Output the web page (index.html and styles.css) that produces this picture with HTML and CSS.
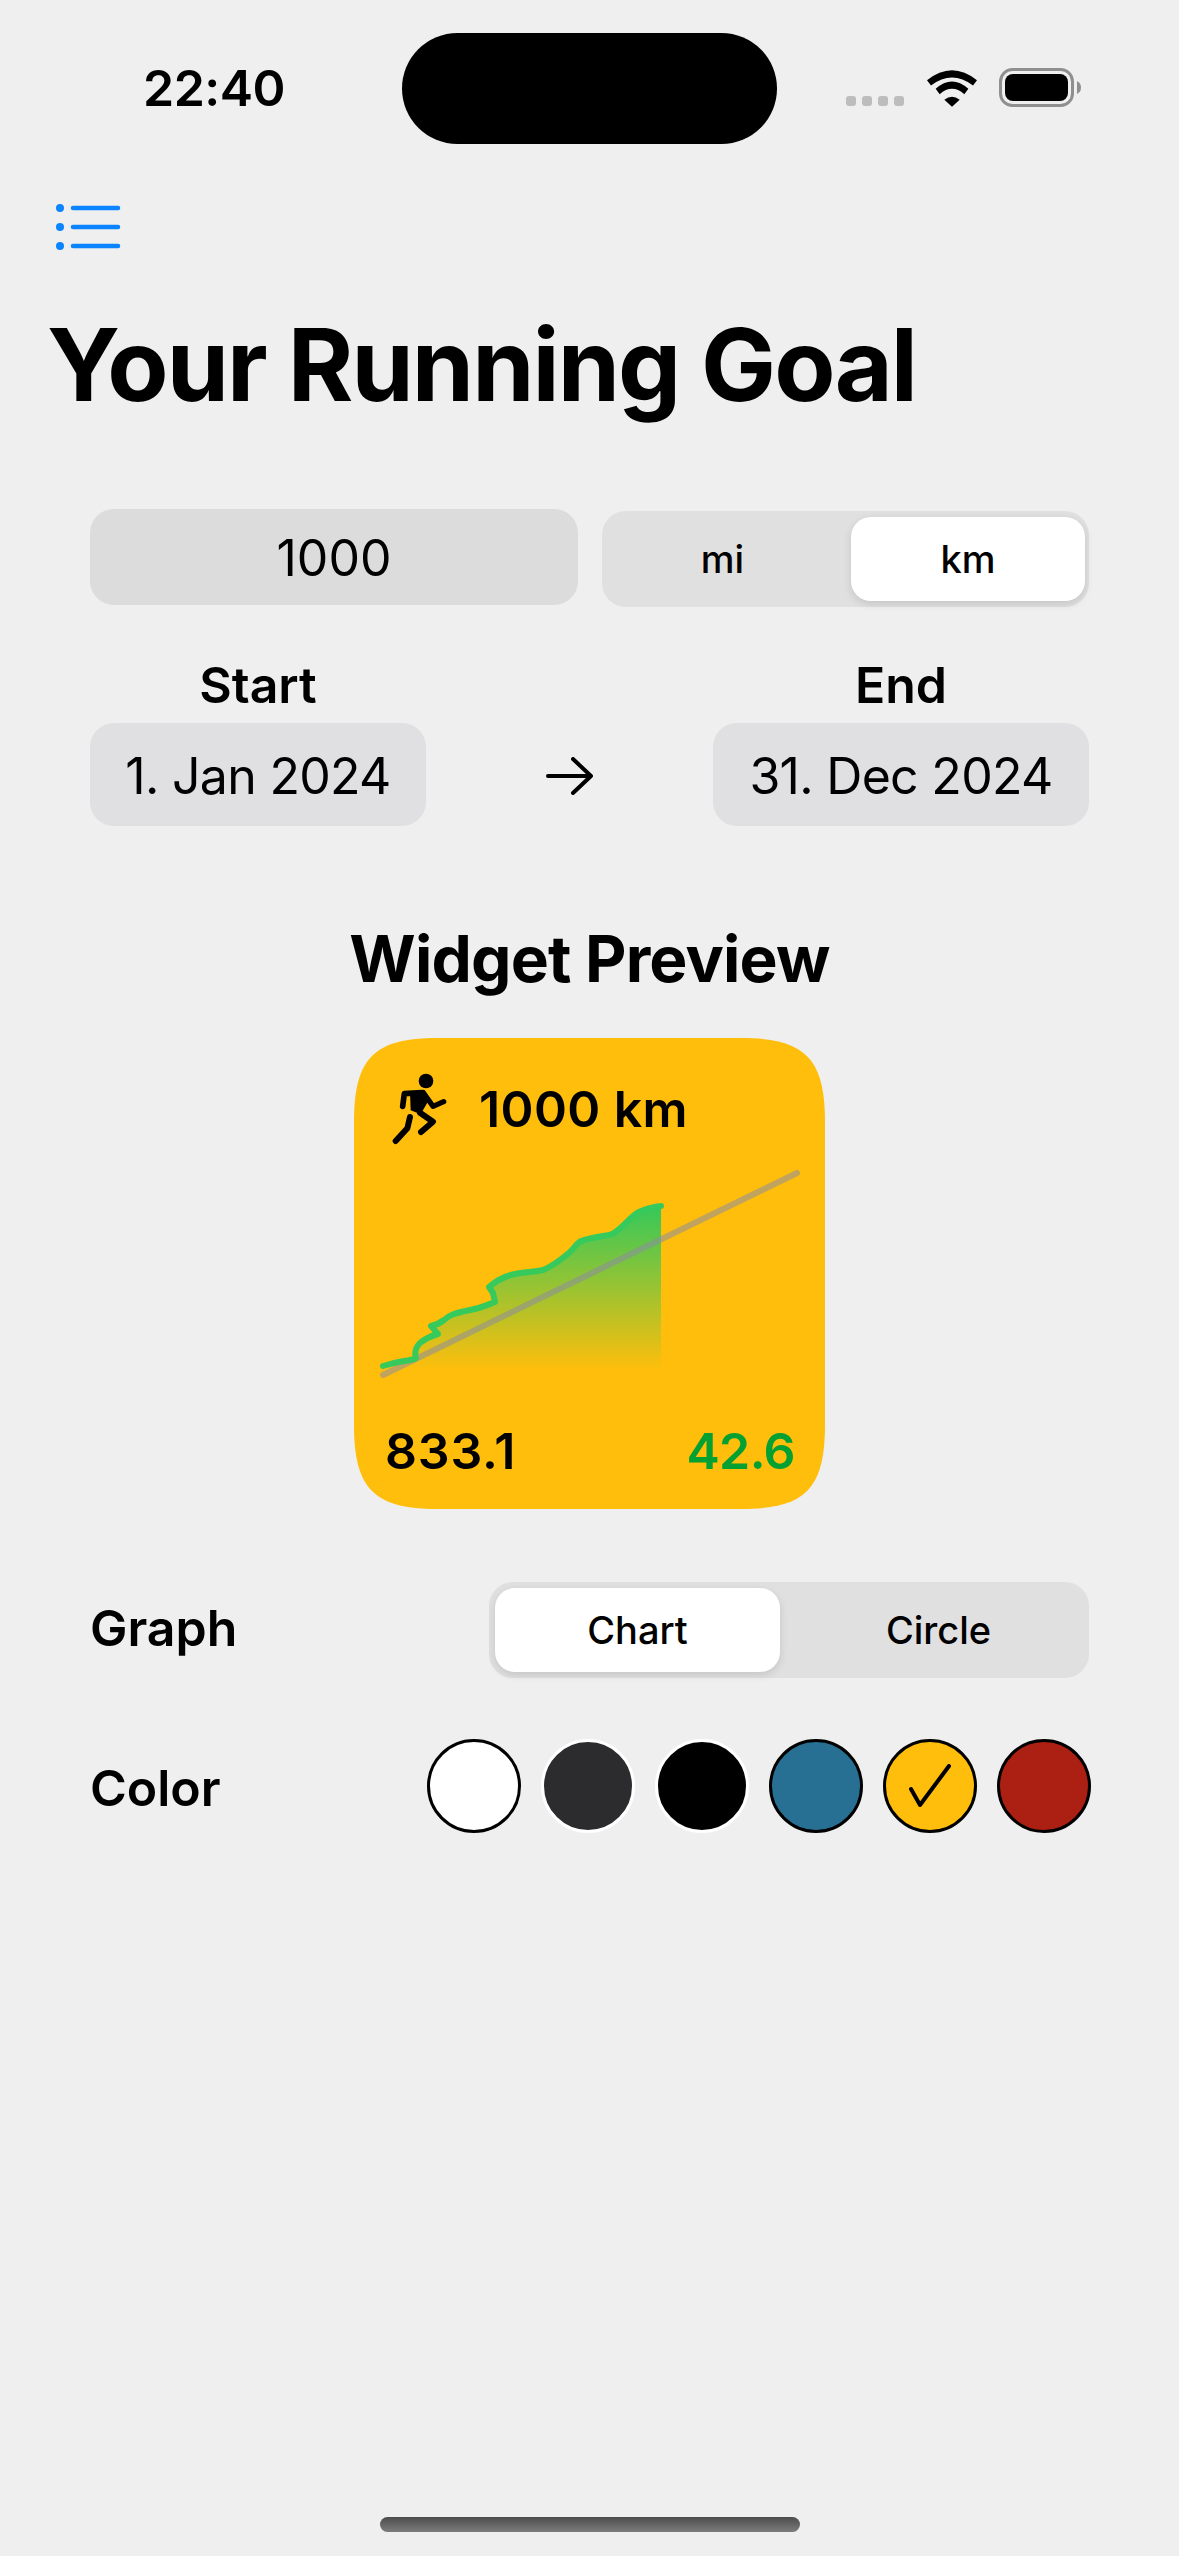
FILE: index.html
```html
<!DOCTYPE html>
<html lang="en">
<head>
<meta charset="utf-8">
<title>Your Running Goal</title>
<link rel="stylesheet" href="styles.css">
</head>
<body>
<div class="screen">
  <header class="status">
    <span class="time">22:40</span>
    <div class="island"></div>
    <div class="status-icons">
      <div class="signal"><i></i><i></i><i></i><i></i></div>
      <svg class="wifi" viewBox="320 88 150 110"><path d="M320 118Q395 58 470 118L458 134Q395 86 332 134Z"/><path d="M346 144Q395 100 444 144L432 160Q395 128 358 160Z"/><path d="M372 177Q395 158 418 177L395 198Z"/></svg>
      <svg class="battery" viewBox="0 0 82 39"><rect x="1.5" y="1.5" width="72" height="36" rx="12" fill="none" stroke="#8f8f8f" stroke-width="3"/><rect x="6" y="6" width="63" height="27" rx="8"/><path d="M78 13Q82 15 82 19.500Q82 24 78 26Z" fill="#8f8f8f"/></svg>
    </div>
  </header>

  <svg class="list-icon" viewBox="50 195 75 65"><g fill="#0a84ff"><ellipse cx="60" cy="208" rx="4" ry="4"/><ellipse cx="60" cy="227" rx="4" ry="4"/><ellipse cx="60" cy="246" rx="4" ry="4"/></g><g stroke="#0a84ff" stroke-width="4.500" stroke-linecap="round"><path d="M73 208H118"/><path d="M73 227H118"/><path d="M73 246H118"/></g></svg>

  <h1 class="title">Your Running Goal</h1>

  <section class="form">
    <div class="goal-row">
      <div class="goal-field">1000</div>
      <div class="segment unit-segment">
        <span class="seg-item">mi</span>
        <span class="seg-item seg-active">km</span>
      </div>
    </div>
    <div class="date-row">
      <div class="date-col">
        <span class="date-label">Start</span>
        <span class="date-pill date-start">1. Jan 2024</span>
      </div>
      <svg class="arrow" viewBox="0 0 48 38"><path d="M2 19H45M27 2L45 19L27 36" fill="none" stroke="#000" stroke-width="4" stroke-linecap="round" stroke-linejoin="round"/></svg>
      <div class="date-col">
        <span class="date-label">End</span>
        <span class="date-pill date-end">31. Dec 2024</span>
      </div>
    </div>
  </section>

  <h2 class="preview-title">Widget Preview</h2>

  <div class="widget">
    <div class="widget-head">
      <svg class="runner" viewBox="66 66 165 216">
        <circle cx="168" cy="90" r="22"/>
        <path d="M120 124L165 120L176 148L152 190L122 178Z"/>
        <g fill="none" stroke="#000" stroke-linecap="round" stroke-linejoin="round">
          <path d="M98 166L103 128L155 125" stroke-width="17"/>
          <path d="M160 125L189 166L221 152" stroke-width="16"/>
          <path d="M150 185L189 212L153 243" stroke-width="18"/>
          <path d="M120 198L112 232L77 270" stroke-width="18"/>
        </g>
      </svg>
      <span class="widget-goal">1000 km</span>
    </div>
    <svg class="chart" viewBox="354 1150 471 250">
      <defs>
        <linearGradient id="area" x1="0" y1="0" x2="0" y2="1">
          <stop offset="0" stop-color="#34c85a" stop-opacity="1"/>
          <stop offset="1" stop-color="#34c85a" stop-opacity="0"/>
        </linearGradient>
      </defs>
      <path d="M383 1366C392 1363 398 1362 404 1361C410 1360 413 1360 416 1358C414 1351 417 1346 420 1343C426 1338 431 1336 438 1334L431 1326C436 1325 440 1323 444 1320C449 1315 455 1313 470 1310C481 1308 487 1305 495 1302L493 1293L489 1287C497 1280 505 1276 515 1274C525 1272 535 1272 543 1270C553 1266 563 1258 570 1252C575 1247 577 1243 581 1241C592 1237 607 1236 612 1234C622 1229 630 1217 637 1213C645 1209 652 1207 661 1206V1370H416Z" fill="url(#area)"/>
      <path d="M383 1375L797 1173" fill="none" stroke="#8c8ca0" stroke-opacity="0.55" stroke-width="6" stroke-linecap="round"/>
      <path d="M383 1366C392 1363 398 1362 404 1361C410 1360 413 1360 416 1358C414 1351 417 1346 420 1343C426 1338 431 1336 438 1334L431 1326C436 1325 440 1323 444 1320C449 1315 455 1313 470 1310C481 1308 487 1305 495 1302L493 1293L489 1287C497 1280 505 1276 515 1274C525 1272 535 1272 543 1270C553 1266 563 1258 570 1252C575 1247 577 1243 581 1241C592 1237 607 1236 612 1234C622 1229 630 1217 637 1213C645 1209 652 1207 661 1206" fill="none" stroke="#36c95c" stroke-width="6" stroke-linecap="round" stroke-linejoin="round"/>
    </svg>
    <div class="widget-foot">
      <span>833.1</span>
      <span class="delta">42.6</span>
    </div>
  </div>

  <section class="options">
    <div class="graph-row">
      <span class="opt-label opt-graph">Graph</span>
      <div class="segment graph-segment">
        <span class="seg-item seg-active">Chart</span>
        <span class="seg-item">Circle</span>
      </div>
    </div>
    <div class="color-row">
      <span class="opt-label opt-color">Color</span>
      <div class="swatches">
        <span class="swatch swatch-white"></span>
        <span class="swatch swatch-graphite"></span>
        <span class="swatch swatch-black"></span>
        <span class="swatch swatch-blue"></span>
        <span class="swatch swatch-yellow"><svg class="check" viewBox="0 0 44 44"><path d="M3 25L12 41L41 2" fill="none" stroke="#000" stroke-width="4" stroke-linecap="round" stroke-linejoin="round"/></svg></span>
        <span class="swatch swatch-red"></span>
      </div>
    </div>
  </section>

  <div class="home-bar"></div>
</div>
</body>
</html>
```
FILE: styles.css
```css
* { box-sizing: border-box; }
html, body { margin: 0; padding: 0; }
body { background: #efefef; font-family: Inter, "Noto Sans", sans-serif; color: #000; }
.screen { width: 1179px; height: 2556px; background: #efefef; display: flex; flex-direction: column; overflow: hidden; }

.status { display: flex; align-items: flex-start; padding: 33px 0 0 143px; height: 144px; }
.time { width: 259px; margin-top: 25px; font-size: 50px; line-height: 60px; font-weight: 600; letter-spacing: -0.5px; }
.island { width: 375px; height: 111px; border-radius: 56px; background: #000; }
.status-icons { display: flex; align-items: flex-end; margin: 35px 0 0 69px; height: 39px; }
.signal { display: flex; gap: 6px; margin-bottom: 1px; }
.signal i { display: block; width: 10px; height: 10px; border-radius: 3px; background: #bdbdbd; }
.wifi { width: 50px; height: 37px; margin-left: 23px; display: block; }
.battery { width: 82px; height: 39px; margin-left: 22px; display: block; }

.list-icon { width: 75px; height: 65px; margin: 51px 0 0 50px; display: block; }
.title { margin: 45px 0 0 47px; font-size: 100px; line-height: 120px; font-weight: 700; letter-spacing: -1.9px; }

.form { padding: 0 90px; margin-top: 84px; display: flex; flex-direction: column; }
.goal-row { display: flex; align-items: flex-start; justify-content: space-between; }
.goal-field { width: 488px; height: 96px; padding-top: 2px; border-radius: 24px; background: #dcdcdc; font-size: 50px; display: flex; align-items: center; justify-content: center; }
.segment { display: flex; background: #e0e0e0; border-radius: 24px; height: 96px; padding: 6px 4px 6px 6px; }
.unit-segment { width: 487px; margin-top: 2px; }
.seg-item { flex: 1; display: flex; align-items: center; justify-content: center; font-size: 38px; font-weight: 500; border-radius: 20px; }
.seg-active { background: #fff; box-shadow: 0 3px 8px rgba(0, 0, 0, 0.12); }
.unit-segment .seg-item:first-child { flex: 0 0 243px; padding-right: 14px; }
.date-row { display: flex; justify-content: space-between; align-items: flex-end; margin-top: 48px; }
.date-col { display: flex; flex-direction: column; align-items: center; }
.date-label { font-size: 50px; line-height: 60px; font-weight: 600; margin-bottom: 8px; }
.date-pill { height: 103px; padding-top: 2px; border-radius: 24px; background: #e0e0e2; font-size: 50px; letter-spacing: -0.7px; display: flex; align-items: center; justify-content: center; }
.date-start { width: 336px; }
.date-end { width: 376px; }
.arrow { width: 48px; height: 38px; margin: 0 0 31px 0; display: block; }

.preview-title { margin: 96px 0 0; text-align: center; font-size: 64px; line-height: 74px; font-weight: 700; letter-spacing: -0.8px; }

.widget { width: 471px; height: 471px; margin: 42px auto 0; background: #ffbe0b; clip-path: path("M0 84C0 20 20 0 84 0H387C451 0 471 20 471 84V387C471 451 451 471 387 471H84C20 471 0 451 0 387Z"); display: flex; flex-direction: column; }
.widget-head { display: flex; align-items: center; padding: 30px 0 0 38px; height: 112px; }
.runner { width: 55px; height: 72px; display: block; }
.widget-goal { margin-left: 32px; font-size: 50px; font-weight: 560; letter-spacing: 0.4px; }
.chart { width: 471px; height: 250px; display: block; flex: none; }
.widget-foot { display: flex; justify-content: space-between; padding: 0 30px 0 31px; font-size: 50px; line-height: 60px; font-weight: 560; letter-spacing: 0.8px; margin-top: 21px; }
.delta { color: #04a032; letter-spacing: -0.6px; }

.options { padding: 0 90px; margin-top: 73px; }
.graph-row, .color-row { display: flex; align-items: center; justify-content: space-between; }
.opt-label { font-size: 50px; font-weight: 600; }
.opt-graph { padding-bottom: 4px; }
.opt-color { padding-top: 3px; }
.graph-segment { width: 600px; }
.graph-row .seg-item:first-child { flex: 0 0 285px; }
.graph-row .seg-item:last-child { padding-left: 12px; }
.color-row { margin-top: 61px; }
.swatches { display: flex; gap: 20px; margin-right: -2px; }
.swatch { width: 94px; height: 94px; border-radius: 50%; border: 3.5px solid #000; display: flex; align-items: center; justify-content: center; }
.swatch-white { background: #fff; }
.swatch-graphite { background: #2c2c2e; border-color: #fff; }
.swatch-black { background: #000; border-color: #fff; }
.swatch-blue { background: #277093; }
.swatch-yellow { background: #ffbe0b; }
.swatch-red { background: #ab2012; }
.check { width: 44px; height: 44px; display: block; }

.home-bar { width: 420px; height: 15px; border-radius: 8px; background: linear-gradient(#4c4c4c, #7c7c7c); margin: auto auto 24px; }
```
